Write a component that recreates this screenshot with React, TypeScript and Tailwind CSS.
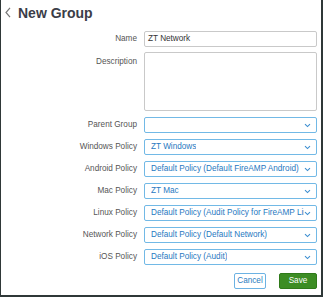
import React from "react";

const Chevron = () => (
  <svg width="7" height="5" viewBox="0 0 7 5" className="shrink-0">
    <path d="M1 1.2 L3.5 3.6 L6 1.2" fill="none" stroke="#3d8fd1" strokeWidth="1.1" />
  </svg>
);

const SelectBox = ({ value }: { value: string }) => (
  <div className="flex h-[16px] w-[173px] items-center justify-between overflow-hidden rounded-[2px] border border-[#72b9e6] bg-white pl-[6px] pr-[5px]">
    <span className="overflow-hidden whitespace-nowrap text-[8.2px] text-[#1f78c1]">{value}</span>
    <Chevron />
  </div>
);

const Row = ({ label, children }: { label: string; children: React.ReactNode }) => (
  <div className="flex items-center">
    <div className="w-[136px] pr-0 text-right text-[8.2px] text-[#555]">{label}</div>
    <div className="ml-[7px]">{children}</div>
  </div>
);

export default function App() {
  const policies: [string, string][] = [
    ["Parent Group", ""],
    ["Windows Policy", "ZT Windows"],
    ["Android Policy", "Default Policy (Default FireAMP Android)"],
    ["Mac Policy", "ZT Mac"],
    ["Linux Policy", "Default Policy (Audit Policy for FireAMP Linux)"],
    ["Network Policy", "Default Policy (Default Network)"],
    ["iOS Policy", "Default Policy (Audit)"],
  ];
  return (
    <div
      className="h-[297px] w-[323px] overflow-hidden bg-[#2f3838]"
      style={{ fontFamily: '"Liberation Sans", Arial, sans-serif' }}
    >
      <div className="ml-[1px] h-[295px] w-[320px] bg-white">
        <div className="flex h-[25px] items-center pt-[0px]">
          <svg width="6" height="11" viewBox="0 0 6 11" className="ml-[4px]">
            <path d="M5 0.8 L1 5.5 L5 10.2" fill="none" stroke="#777" strokeWidth="1.2" />
          </svg>
          <span className="ml-[7px] text-[14px] font-bold leading-none text-[#3b3d48]">New Group</span>
        </div>
        <div className="mt-[6px] flex flex-col">
          <Row label="Name">
            <div className="flex h-[16px] w-[173px] items-center rounded-[2px] border border-[#c9c9c9] bg-white pl-[3px] text-[8.2px] text-[#333]">
              ZT Network
            </div>
          </Row>
          <div className="mt-[5px] flex items-start">
            <div className="w-[136px] pt-[4px] text-right text-[8.2px] text-[#555]">Description</div>
            <div className="ml-[7px] h-[59px] w-[173px] rounded-[2px] border border-[#c9c9c9] bg-white" />
          </div>
          <div className="mt-[6px] flex flex-col gap-[6px]">
            {policies.map(([l, v]) => (
              <Row key={l} label={l}>
                <SelectBox value={v} />
              </Row>
            ))}
          </div>
          <div className="mt-[8px] flex justify-end gap-[13px] pr-[4px]">
            <button className="flex h-[16px] w-[32px] items-center justify-center rounded-[2px] border border-[#6cb2e3] bg-white text-[8.2px] text-[#2b7cc0]">
              Cancel
            </button>
            <button className="flex h-[16px] w-[38px] items-center justify-center rounded-[2px] border border-[#2f7a1a] bg-[#3c8d24] text-[8.2px] text-white">
              Save
            </button>
          </div>
        </div>
      </div>
    </div>
  );
}
